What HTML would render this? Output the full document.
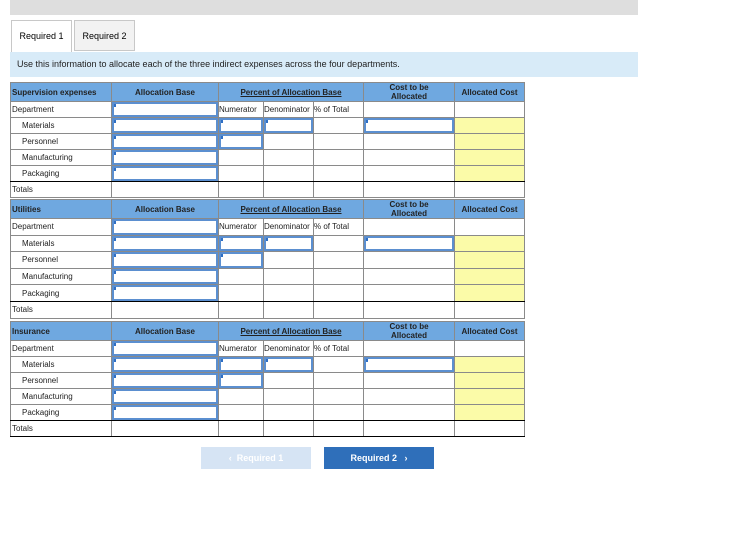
<!DOCTYPE html>
<html><head><style>
body{margin:0;width:747px;height:544px;background:#fff;font-family:"Liberation Sans",sans-serif;position:relative;overflow:hidden}
.top{position:absolute;left:10px;top:0;width:628px;height:15px;background:#dedede}
.tab{position:absolute;top:20px;height:31px;font-size:9px;line-height:31px;text-align:center;box-sizing:border-box;border:1px solid #c8c8c8}
.info{position:absolute;left:10px;top:52px;width:628px;height:25px;background:#d8ebf8;font-size:9px;line-height:25px;padding-left:7px;box-sizing:border-box;color:#222}
table{position:absolute;left:10px;border-collapse:collapse;table-layout:fixed;width:514px;font-size:8px;color:#222}
td{border:1px solid #8a8a8a;padding:0;height:15px;overflow:hidden;white-space:nowrap;position:relative}
table.s2 td{height:15.6px}
tr.h td{background:#6fa8e0;height:18px;text-align:center;font-weight:bold;color:#222}
table.s2 tr.h td{height:18px}
tr.h td:first-child{text-align:left;padding-left:1px}
.u{text-decoration:underline}
td.l{padding-left:1px}td.i{padding-left:11px}
.in{position:absolute;left:0;top:0;right:0;bottom:0;border:2px solid #5b8fd0}
.in:before{content:"";position:absolute;left:0;top:0;width:2px;height:3px;background:#2f6fc4}
td.y{background:#fbfba8}
tr.t td{border-bottom:1.5px solid #000}
.btn{position:absolute;top:447px;height:22px;font-size:9px;font-weight:bold;line-height:22px;text-align:center;color:#fff}
</style></head><body>
<div class="top"></div>
<div class="tab" style="left:11px;width:61px;background:#fff;border-bottom:none;height:32px">Required 1</div>
<div class="tab" style="left:74px;width:61px;background:#f2f2f2">Required 2</div>
<div class="info">Use this information to allocate each of the three indirect expenses across the four departments.</div>

<table style="top:82px"><colgroup><col style="width:101px"><col style="width:107px"><col style="width:45px"><col style="width:50px"><col style="width:50px"><col style="width:91px"><col style="width:70px"></colgroup>
<tr class="h"><td>Supervision expenses</td><td>Allocation Base</td><td colspan="3" class="u">Percent of Allocation Base</td><td style="line-height:9px">Cost to be<br>Allocated</td><td>Allocated Cost</td></tr>
<tr><td class="l">Department</td><td><div class="in"></div></td><td>Numerator</td><td>Denominator</td><td>% of Total</td><td></td><td></td></tr>
<tr><td class="i">Materials</td><td><div class="in"></div></td><td><div class="in"></div></td><td><div class="in"></div></td><td></td><td><div class="in"></div></td><td class="y"></td></tr>
<tr><td class="i">Personnel</td><td><div class="in"></div></td><td><div class="in"></div></td><td></td><td></td><td></td><td class="y"></td></tr>
<tr><td class="i">Manufacturing</td><td><div class="in"></div></td><td></td><td></td><td></td><td></td><td class="y"></td></tr>
<tr class="t"><td class="i">Packaging</td><td><div class="in"></div></td><td></td><td></td><td></td><td></td><td class="y"></td></tr>
<tr><td class="l">Totals</td><td></td><td></td><td></td><td></td><td></td><td></td></tr>
</table>

<table class="s2" style="top:199px"><colgroup><col style="width:101px"><col style="width:107px"><col style="width:45px"><col style="width:50px"><col style="width:50px"><col style="width:91px"><col style="width:70px"></colgroup>
<tr class="h"><td>Utilities</td><td>Allocation Base</td><td colspan="3" class="u">Percent of Allocation Base</td><td style="line-height:9px">Cost to be<br>Allocated</td><td>Allocated Cost</td></tr>
<tr><td class="l">Department</td><td><div class="in"></div></td><td>Numerator</td><td>Denominator</td><td>% of Total</td><td></td><td></td></tr>
<tr><td class="i">Materials</td><td><div class="in"></div></td><td><div class="in"></div></td><td><div class="in"></div></td><td></td><td><div class="in"></div></td><td class="y"></td></tr>
<tr><td class="i">Personnel</td><td><div class="in"></div></td><td><div class="in"></div></td><td></td><td></td><td></td><td class="y"></td></tr>
<tr><td class="i">Manufacturing</td><td><div class="in"></div></td><td></td><td></td><td></td><td></td><td class="y"></td></tr>
<tr class="t"><td class="i">Packaging</td><td><div class="in"></div></td><td></td><td></td><td></td><td></td><td class="y"></td></tr>
<tr><td class="l">Totals</td><td></td><td></td><td></td><td></td><td></td><td></td></tr>
</table>

<table style="top:321px"><colgroup><col style="width:101px"><col style="width:107px"><col style="width:45px"><col style="width:50px"><col style="width:50px"><col style="width:91px"><col style="width:70px"></colgroup>
<tr class="h"><td>Insurance</td><td>Allocation Base</td><td colspan="3" class="u">Percent of Allocation Base</td><td style="line-height:9px">Cost to be<br>Allocated</td><td>Allocated Cost</td></tr>
<tr><td class="l">Department</td><td><div class="in"></div></td><td>Numerator</td><td>Denominator</td><td>% of Total</td><td></td><td></td></tr>
<tr><td class="i">Materials</td><td><div class="in"></div></td><td><div class="in"></div></td><td><div class="in"></div></td><td></td><td><div class="in"></div></td><td class="y"></td></tr>
<tr><td class="i">Personnel</td><td><div class="in"></div></td><td><div class="in"></div></td><td></td><td></td><td></td><td class="y"></td></tr>
<tr><td class="i">Manufacturing</td><td><div class="in"></div></td><td></td><td></td><td></td><td></td><td class="y"></td></tr>
<tr class="t"><td class="i">Packaging</td><td><div class="in"></div></td><td></td><td></td><td></td><td></td><td class="y"></td></tr>
<tr class="t"><td class="l">Totals</td><td></td><td></td><td></td><td></td><td></td><td></td></tr>
</table>

<div class="btn" style="left:201px;width:110px;background:#d6e4f4">&lsaquo;&nbsp;&nbsp;Required 1</div>
<div class="btn" style="left:324px;width:110px;background:#2f6fba">Required 2&nbsp;&nbsp;&nbsp;&rsaquo;</div>
</body></html>
